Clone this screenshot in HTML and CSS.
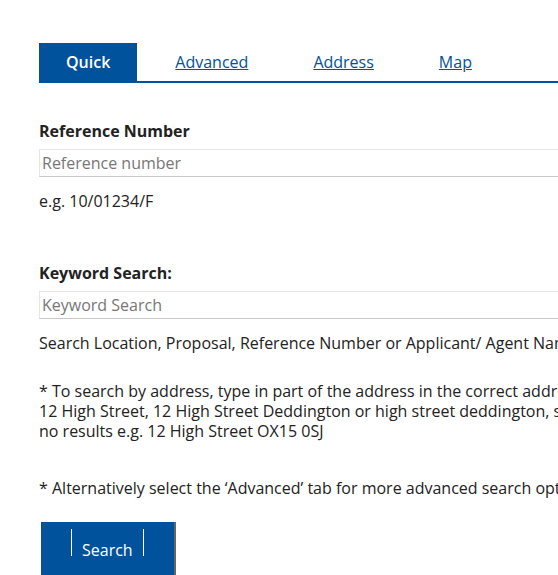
FILE: index.html
```html
<!DOCTYPE html>
<html>
<head>
  <title>Planning Search</title>
  <link rel="stylesheet" href="styles.css">
</head>
<body>
  <div class="page">
    <ul class="tabs">
      <li class="tab active">Quick</li>
      <li class="tab"><a href="#">Advanced</a></li>
      <li class="tab"><a href="#">Address</a></li>
      <li class="tab"><a href="#">Map</a></li>
    </ul>

    <form class="search-form">
      <label class="label" for="ref">Reference Number</label>
      <input type="text" id="ref" class="field" placeholder="Reference number">
      <p class="hint">e.g. 10/01234/F</p>

      <label class="label keyword" for="keyword">Keyword Search:</label>
      <input type="text" id="keyword" class="field" placeholder="Keyword Search">
      <p class="hint">Search Location, Proposal, Reference Number or Applicant/ Agent Name</p>

      <p class="note">* To search by address, type in part of the address in the correct address format e.g.<br>
        12 High Street, 12 High Street Deddington or high street deddington, searching by postcode may return<br>
        no results e.g. 12 High Street OX15 0SJ</p>

      <p class="note last">* Alternatively select the ‘Advanced’ tab for more advanced search options</p>

      <button type="button" class="search-button"><span>Search</span></button>
    </form>
  </div>
</body>
</html>
```

FILE: styles.css
```css
body {
  margin: 0;
  font-family: "Open Sans", sans-serif;
  color: #222;
  background-color: #fff;
  overflow: hidden;
}

.page {
  width: 900px;
  padding: 43px 0 0 39px;
}

.tabs {
  display: flex;
  margin: 0;
  padding: 0;
  list-style: none;
  border-bottom: 2px solid #00529c;
}

.tab {
  height: 38px;
  line-height: 38px;
  margin-right: 9px;
  padding: 0 28px;
  font-size: 16px;
}

.tab a {
  color: #00529c;
}

.tab.active {
  margin-right: 10px;
  padding: 0 27px;
  background-color: #00529c;
  color: #fff;
  font-weight: 600;
}

.search-form {
  padding-top: 38px;
}

.label {
  display: block;
  font-size: 16px;
  font-weight: bold;
  line-height: 20px;
}

.label.keyword {
  margin-top: 52px;
}

.field {
  display: block;
  box-sizing: border-box;
  width: 800px;
  height: 28px;
  margin: 8px 0 0;
  padding: 0 2px;
  font-family: "Open Sans", sans-serif;
  font-size: 16px;
  border: 1px solid #e6e6e6;
  border-bottom-color: #c8c8c8;
  outline: none;
}

.field::placeholder {
  color: #777;
}

.hint,
.note {
  margin: 14px 0 0;
  font-size: 16px;
  line-height: 20px;
  white-space: nowrap;
}

.note {
  margin-top: 28px;
}

.note.last {
  margin-top: 37px;
}

.search-button {
  display: block;
  margin: 24px 0 0 2px;
  padding: 7px 30px 30px;
  background-color: #00529c;
  color: #fff;
  font-family: "Open Sans", sans-serif;
  font-size: 16px;
  border: none;
  border-right: 2px solid #666;
  cursor: pointer;
}

.search-button span {
  display: inline-block;
  padding: 15px 10px 0;
  line-height: 12px;
  border-left: 1px solid #fff;
  border-right: 1px solid #fff;
}
```
